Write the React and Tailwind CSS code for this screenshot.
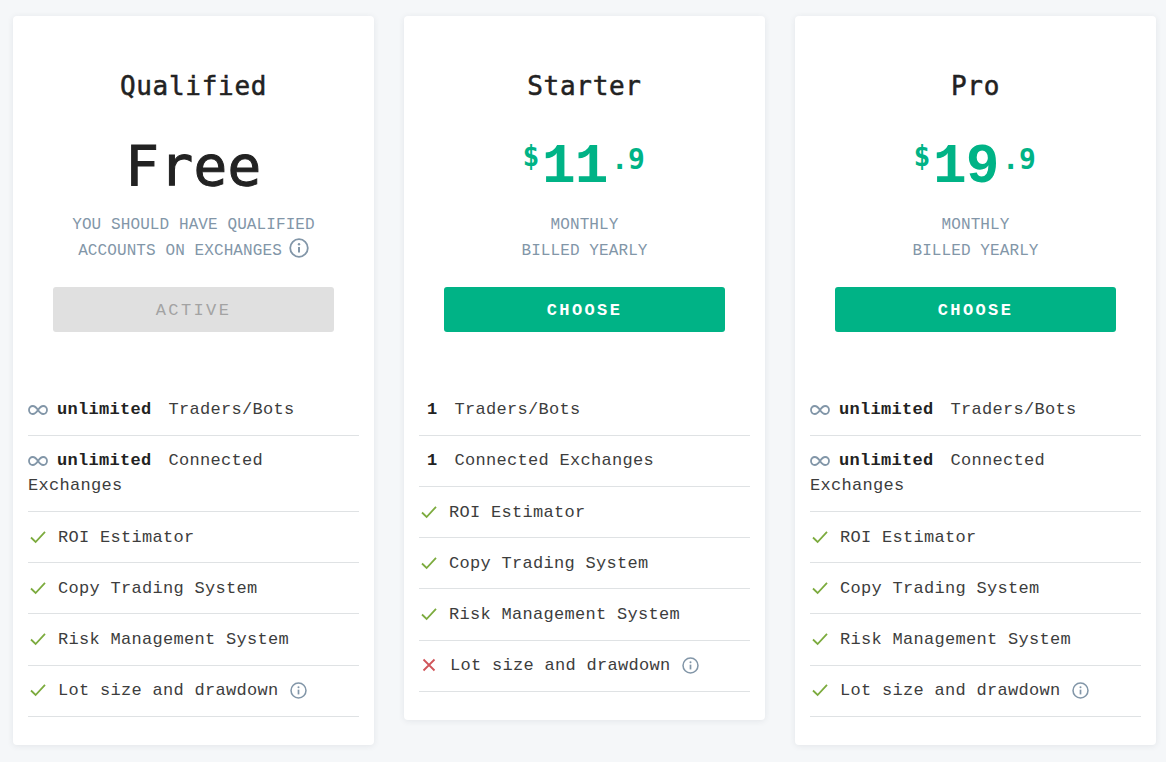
function Info({ className = "" }) {
  return (
    <svg viewBox="0 0 20 20" fill="none" stroke="#8296a8" className={className}>
      <circle cx="10" cy="10" r="8.8" strokeWidth="1.8" />
      <circle cx="10" cy="6.2" r="1.2" fill="#8296a8" stroke="none" />
      <path d="M10 9v5.6" strokeWidth="2" />
    </svg>
  );
}
function Check() {
  return (
    <svg viewBox="0 0 16 14" fill="none" stroke="#7cab3e" strokeWidth="1.8" className="w-4 h-[14px] inline-block mr-3 ml-0.5 align-[-2px]">
      <path d="M1 7.5 L5.6 12 L15 1.8" />
    </svg>
  );
}
function Cross() {
  return (
    <svg viewBox="0 0 14 14" fill="none" stroke="#d0555a" strokeWidth="1.8" className="w-[14px] h-[14px] inline-block ml-[3px] mr-[14px] align-[-2px]">
      <path d="M1.5 1.5 L12.5 12.5 M12.5 1.5 L1.5 12.5" />
    </svg>
  );
}
function Inf() {
  return (
    <svg viewBox="0 0 20 10" fill="none" stroke="#8296a8" strokeWidth="1.8" className="w-5 h-2.5 inline-block mr-[9px] align-[-1px]">
      <path d="M10 5C8 2 6.6 1 4.8 1 2.6 1 1 2.8 1 5s1.6 4 3.8 4C6.6 9 8 8 10 5c2-3 3.4-4 5.2-4C17.4 1 19 2.8 19 5s-1.6 4-3.8 4C13.4 9 12 8 10 5z" />
    </svg>
  );
}
function Row({ children }) {
  return <li className="py-[12.6px] leading-[25px] border-b border-[#dfe2e4] text-[#3d3d3d]">{children}</li>;
}
function Unl({ children }) {
  return <Row><Inf /><b className="font-bold text-[#222] mr-[17px]">unlimited</b>{children}</Row>;
}
function One({ children }) {
  return <Row><b className="font-bold text-[#222] ml-2 mr-[17px]">1</b>{children}</Row>;
}
function Lot({ icon }) {
  return <Row>{icon}Lot size and drawdown<Info className="w-[17px] h-[17px] inline-block ml-[11px] align-[-4px]" /></Row>;
}
function Price({ a }) {
  return (
    <div className="flex justify-center text-[#00b386] font-bold h-[56px] leading-none pt-[2px] -ml-[2px]">
      <span className="font-['DejaVu_Sans_Mono',monospace] text-[28px] tracking-normal mt-[3px] mr-[2px] w-[18px]">$</span>
      <span className="text-[56px] tracking-[-1px] -mt-[1px]">{a}</span>
      <span className="font-['DejaVu_Sans_Mono',monospace] text-[28px] tracking-normal mt-[6px] ml-[4px]">.9</span>
    </div>
  );
}
function Card({ title, price, sub, button, active, rows }) {
  return (
    <div className="w-[361px] shrink-0 bg-white rounded-[4px] shadow-[0_1px_6px_rgba(40,60,80,0.09)] px-[15px] pb-[28px]">
      <div className="px-[25px] pt-[54px] text-center">
        <h2 className="font-['DejaVu_Sans_Mono',monospace] text-[26px] leading-[32px] tracking-[0.7px] text-[#222] font-normal [-webkit-text-stroke:0.5px_#222]">{title}</h2>
        <div className="mt-[36px] h-[56px]">{price}</div>
        <div className="mt-[18px] h-[52px] text-[16px] leading-[26px] tracking-[0.1px] text-[#8296a8] font-normal">{sub}</div>
        <button className={`mt-[23px] block w-full h-[45px] pt-[2px] rounded-[3px] font-bold text-[17px] tracking-[2.4px] ${active ? "bg-[#e0e0e0] text-[#a3a3a3] font-normal" : "bg-[#00b386] text-white"}`}>{button}</button>
      </div>
      <ul className="mt-[52.6px]">{rows}</ul>
    </div>
  );
}
const full = [
  <Unl key="a">Traders/Bots</Unl>,
  <Unl key="b">Connected Exchanges</Unl>,
  <Row key="c"><Check />ROI Estimator</Row>,
  <Row key="d"><Check />Copy Trading System</Row>,
  <Row key="e"><Check />Risk Management System</Row>,
  <Lot key="f" icon={<Check />} />,
];
const starter = [
  <One key="a">Traders/Bots</One>,
  <One key="b">Connected Exchanges</One>,
  <Row key="c"><Check />ROI Estimator</Row>,
  <Row key="d"><Check />Copy Trading System</Row>,
  <Row key="e"><Check />Risk Management System</Row>,
  <Lot key="f" icon={<Cross />} />,
];
const monthly = <>MONTHLY<br />BILLED YEARLY</>;
export default function App() {
  return (
    <div className="min-h-[762px] bg-[#f5f7f9] pl-[13px] pt-[16px] flex items-start gap-[30px] text-[17px] tracking-[0.3px] font-['Liberation_Mono',monospace]">
      <Card
        title="Qualified"
        price={<div className="font-['DejaVu_Sans_Mono',monospace] text-[56px] leading-[56px] tracking-[0.4px] text-[#222] font-normal [-webkit-text-stroke:1px_#222]">Free</div>}
        sub={<>YOU SHOULD HAVE QUALIFIED<br />ACCOUNTS ON EXCHANGES<Info className="w-5 h-5 inline-block ml-[7px] align-[-3px]" /></>}
        button="ACTIVE"
        active
        rows={full}
      />
      <Card title="Starter" price={<Price a="11" />} sub={monthly} button="CHOOSE" rows={starter} />
      <Card title="Pro" price={<Price a="19" />} sub={monthly} button="CHOOSE" rows={full} />
    </div>
  );
}
